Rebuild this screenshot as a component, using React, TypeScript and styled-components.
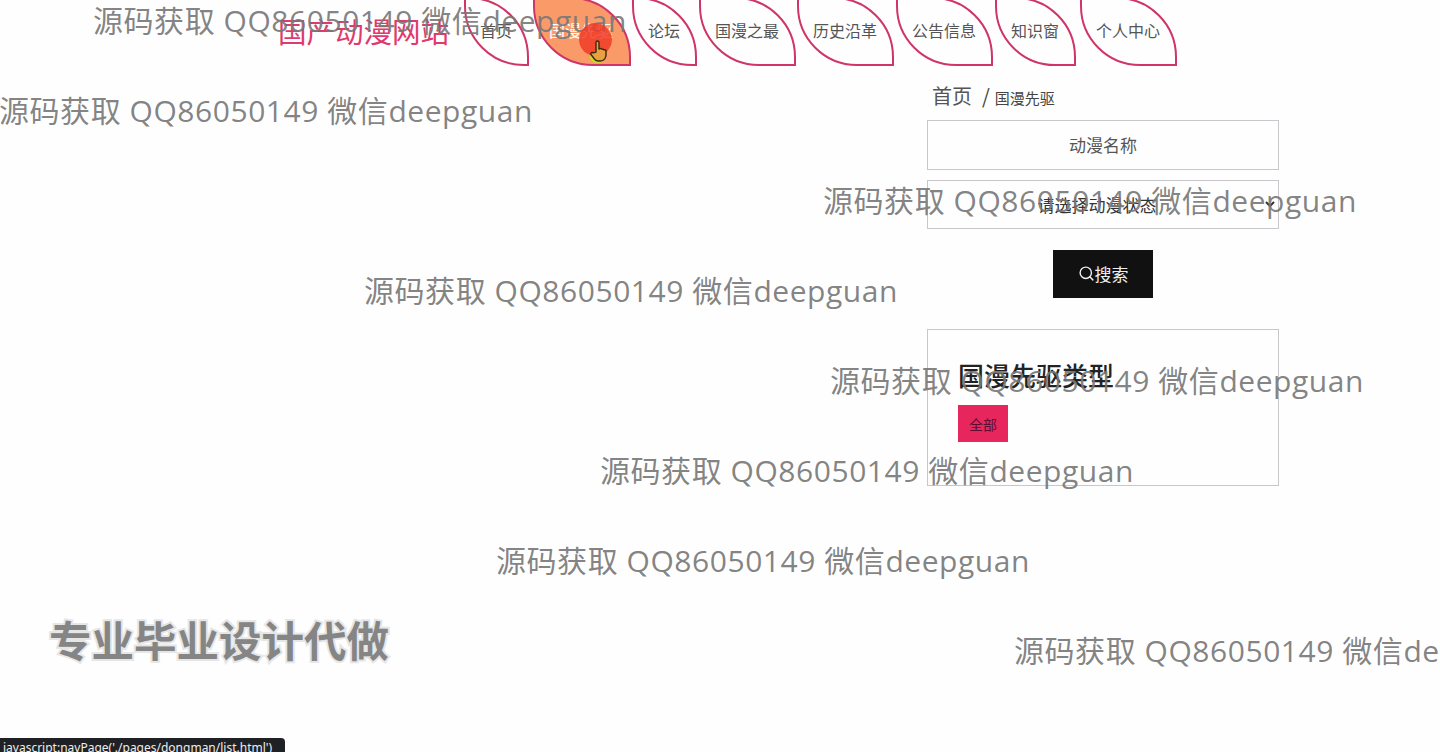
import React from "react";
import styled, { createGlobalStyle } from "styled-components";
import { Search } from "lucide-react";

const FONT = `"Noto Sans CJK SC", "Noto Sans", sans-serif`;

const GlobalStyle = createGlobalStyle`
  html, body {
    margin: 0;
    height: 100%;
    overflow: hidden;
    background: #fefefe;
    font-family: ${FONT};
  }
  * {
    box-sizing: border-box;
  }
`;

const Page = styled.div`
  position: relative;
  width: 1440px;
  height: 752px;
  overflow: hidden;
`;

const Header = styled.header`
  display: flex;
  align-items: center;
  height: 69px;
  margin-top: -3px;
  padding-left: 278px;
`;

const Logo = styled.div`
  width: 186px;
  padding-bottom: 2px;
  font-size: 28.5px;
  line-height: 40px;
  color: #df3a6d;
`;

const Nav = styled.nav`
  display: flex;
  height: 100%;
`;

const Tab = styled.a<{ $gap: number; $active?: boolean }>`
  display: flex;
  align-items: center;
  height: 100%;
  margin-left: ${({ $gap }) => $gap}px;
  padding: 0 ${({ $active }) => ($active ? 16 : 15)}px 3px 14px;
  border: 2px solid #cf3567;
  border-radius: 0 60px 0 60px;
  font-size: 16px;
  color: ${({ $active }) => ($active ? "#fff" : "#555")};
  background: ${({ $active }) => ($active ? "#fb9a69" : "transparent")};
`;

const Main = styled.main`
  display: flex;
  justify-content: flex-end;
  padding: 15px 161px 0 0;
`;

const Sidebar = styled.aside`
  display: flex;
  flex-direction: column;
  width: 352px;
`;

const Crumbs = styled.div`
  display: flex;
  align-items: baseline;
  height: 30px;
  padding-left: 5px;
  margin-bottom: 9px;
  font-size: 20px;
  line-height: 30px;
  color: #555;
`;

const CrumbSep = styled.span`
  margin: 0 5px 0 10px;
  color: #444;
`;

const CrumbCurrent = styled.span`
  font-size: 15px;
  color: #444;
`;

const NameInput = styled.input`
  width: 100%;
  height: 50px;
  padding-bottom: 3px;
  border: 1px solid #c9c6cc;
  background: transparent;
  font-family: ${FONT};
  font-size: 17px;
  text-align: center;
  outline: none;

  &::placeholder {
    color: #555;
    opacity: 1;
  }
`;

const StatusSelect = styled.select`
  width: 100%;
  height: 49px;
  margin-top: 10px;
  border: 1px solid #c9c6cc;
  background: transparent;
  font-family: ${FONT};
  font-size: 17px;
  color: #333;
  text-align: center;
  text-align-last: center;
  outline: none;
`;

const SearchButton = styled.button`
  display: flex;
  align-items: center;
  justify-content: center;
  align-self: center;
  width: 100px;
  height: 48px;
  margin-top: 21px;
  padding-bottom: 2px;
  border: 0;
  background: #111;
  color: #eee;
  font-family: ${FONT};
  font-size: 17px;
`;

const TypePanel = styled.section`
  height: 157px;
  margin-top: 31px;
  padding: 26px 30px 0;
  border: 1px solid #c9c6cc;
`;

const PanelTitle = styled.h3`
  margin: 0;
  font-size: 26px;
  line-height: 38px;
  font-weight: 500;
  color: #222;
`;

const TypeChip = styled.a`
  display: flex;
  align-items: center;
  justify-content: center;
  width: 50px;
  height: 37px;
  margin-top: 11px;
  background: #e8265e;
  font-size: 14px;
  color: #5a1030;
`;

const Watermark = styled.div<{ $x: number; $y: number }>`
  position: absolute;
  left: ${({ $x }) => $x}px;
  top: ${({ $y }) => $y}px;
  font-family: "Open Sans", "Noto Sans CJK SC", sans-serif;
  font-size: 30px;
  line-height: 40px;
  letter-spacing: 0.55px;
  white-space: nowrap;
  color: rgba(120, 120, 120, 0.92);
`;

const Promo = styled.div`
  position: absolute;
  left: 49px;
  top: 612px;
  font-size: 42.5px;
  line-height: 54px;
  font-weight: 700;
  color: #858585;
  -webkit-text-stroke: 4px #e6e6e6;
  paint-order: stroke fill;
`;

const StatusBubble = styled.div`
  position: absolute;
  left: 0;
  top: 738px;
  width: 285px;
  height: 14px;
  padding: 2px 0 0 3px;
  border-radius: 0 4px 0 0;
  background: #202124;
  font-family: "Noto Sans", sans-serif;
  font-size: 12px;
  line-height: 15px;
  white-space: nowrap;
  overflow: hidden;
  color: #eee;
`;

const ClickRing = styled.div`
  position: absolute;
  left: 579px;
  top: 23px;
  width: 33px;
  height: 33px;
  border-radius: 50%;
  background: rgba(240, 60, 40, 0.85);
`;

const Pointer = styled.svg`
  position: absolute;
  left: 588px;
  top: 39px;
`;

const NAV_ITEMS = [
  { label: "首页", gap: 0 },
  { label: "国漫先驱", gap: 4, active: true },
  { label: "论坛", gap: 1 },
  { label: "国漫之最", gap: 2 },
  { label: "历史沿革", gap: 1 },
  { label: "公告信息", gap: 2 },
  { label: "知识窗", gap: 2 },
  { label: "个人中心", gap: 4 },
];

const WATERMARK_SPOTS = [
  [93, 1],
  [-1, 91],
  [823, 181],
  [364, 271],
  [830, 361],
  [600, 451],
  [496, 541],
  [1014, 631],
];

const App: React.FC = () => {
  return (
    <Page>
      <GlobalStyle />
      <Header>
        <Logo>国产动漫网站</Logo>
        <Nav>
          {NAV_ITEMS.map((item) => (
            <Tab key={item.label} $gap={item.gap} $active={item.active}>
              {item.label}
            </Tab>
          ))}
        </Nav>
      </Header>

      <Main>
        <Sidebar>
          <Crumbs>
            首页
            <CrumbSep>/</CrumbSep>
            <CrumbCurrent>国漫先驱</CrumbCurrent>
          </Crumbs>
          <NameInput placeholder="动漫名称" />
          <StatusSelect defaultValue="">
            <option value="">请选择动漫状态</option>
          </StatusSelect>
          <SearchButton>
            <Search size={17} strokeWidth={2} />
            搜索
          </SearchButton>
          <TypePanel>
            <PanelTitle>国漫先驱类型</PanelTitle>
            <TypeChip>全部</TypeChip>
          </TypePanel>
        </Sidebar>
      </Main>

      {WATERMARK_SPOTS.map(([x, y]) => (
        <Watermark key={y} $x={x} $y={y}>
          源码获取 QQ86050149 微信deepguan
        </Watermark>
      ))}

      <Promo>专业毕业设计代做</Promo>
      <StatusBubble>javascript:navPage('./pages/dongman/list.html')</StatusBubble>

      <ClickRing />
      <Pointer width="22" height="25" viewBox="0 0 22 25">
        <ellipse cx="10" cy="18" rx="8" ry="6" fill="#c8e020" />
        <path
          d="M8 13V3.5a1.5 1.5 0 0 1 3 0V10l1-.3a1.4 1.4 0 0 1 2 .6 1.4 1.4 0 0 1 2 .6 1.4 1.4 0 0 1 2 1V16c0 3-2 6-5.5 6H10c-2 0-3-1-4-2.500L3 15.500c-.8-1.300 1-2.800 2.200-1.600z"
          fill="#e8a040"
          stroke="#3a2a10"
          strokeWidth="1.4"
          strokeLinejoin="round"
        />
      </Pointer>
    </Page>
  );
};

export default App;
